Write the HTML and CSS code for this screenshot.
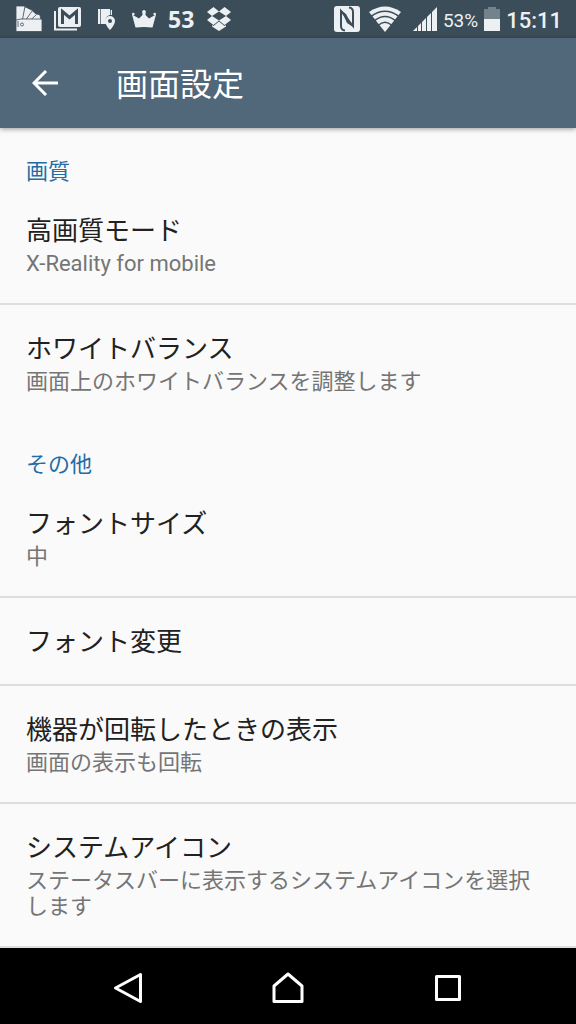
FILE: index.html
```html
<!DOCTYPE html>
<html lang="ja">
<head>
<meta charset="utf-8">
<meta name="viewport" content="width=device-width, initial-scale=1">
<title>画面設定</title>
<link rel="stylesheet" href="styles.css">
</head>
<body>
<div class="status-bar">
  <div class="notifications">
    <svg width="26" height="26" viewBox="0 0 26 26" fill="#edf0f2" stroke="#3c4d5a" stroke-width="0.8">
      <path d="M18 7l6 2 1 5.500L7 22z"/><path d="M14.500 3l6 5.500L5 23z"/><path d="M8.500 .500l8 4L4 22z"/><path d="M0 0h9L5 22H0z"/>
      <path d="M0 14l5-1h20q1 0 1 1v10.500q0 1-1 1H1q-1 0-1-1z"/><circle cx="6" cy="18.500" r="1.500"/><path d="M2 15v6"/>
    </svg>
    <svg class="mail" width="28" height="24" viewBox="0 0 28 24" fill="none">
      <path d="M1 4v18.500H23" stroke="#edf0f2" stroke-width="2"/>
      <rect x="4" y="0" width="23" height="20" rx="2" fill="#edf0f2"/>
      <path d="M8.500 17V4.500l7 6 7-6V17" stroke="#3c4d5a" stroke-width="3"/>
    </svg>
    <svg class="place" width="18" height="22" viewBox="0 0 18 22">
      <path d="M0 1h2v15H0zM2.700 1H12v6c-4 1-6 5-3 9H2.700zM12.700 2H14v5h-1.300z" fill="#edf0f2"/>
      <path d="M12 8a5 5 0 0 0-5 5c0 4 5 9 5 9s5-5 5-9a5 5 0 0 0-5-5zm0 3a2 2 0 1 1 0 4 2 2 0 0 1 0-4z" fill="#edf0f2" fill-rule="evenodd"/>
    </svg>
    <svg width="24" height="18" viewBox="0 0 24 18" fill="#edf0f2">
      <path d="M3.500 17.500L0 4.500l7 4L10.500 5V2h3v3L17 8.500l7-4-3.500 13q-8.500-1-17 0z"/>
      <circle cx="1.300" cy="4" r="1.300"/><circle cx="12" cy="1.800" r="1.800"/><circle cx="22.700" cy="4" r="1.300"/>
    </svg>
    <span class="count">53</span>
    <svg width="26" height="24" viewBox="0 0 26 24" fill="#edf0f2">
      <path d="M7.500 0L13 4.500 6 9 1 5zM18.500 0L13 4.500 20 9l5-4zM6 9l7 4.500L7.500 18 1 13zM20 9l-7 4.500 5.500 4.500 6.500-5zM13 14.500l5.500 4.500 1.500-1v1.500L13 24l-7-4.500V18l1.500 1z"/>
    </svg>
  </div>
  <div class="system">
    <svg class="nfc" width="26" height="26" viewBox="0 0 26 26">
      <rect x="0" y="0" width="26" height="26" rx="3" fill="#edf0f2"/>
      <path d="M11 24.500Q7 24 7 20V5L19 20V6Q19 2 15 1.500" fill="none" stroke="#3c4d5a" stroke-width="2"/>
      <path d="M7 4L12 8l7 13-6-4z" fill="#3c4d5a"/>
    </svg>
    <svg class="wifi" width="32" height="26" viewBox="0 0 32 26" fill="#edf0f2">
      <path d="M0 6Q16-5 32 6L16 26z"/>
      <path d="M2 10.500Q16 0 30 10.500M5 15Q16 6 27 15M9 19.500Q16 13 23 19.500" fill="none" stroke="#3c4d5a" stroke-width="1.600"/>
    </svg>
    <svg class="signal" width="24" height="24" viewBox="0 0 24 24" fill="#edf0f2">
      <path d="M0 24L24 0v24z"/><path d="M4.500 18v6M8.500 13v11M13.500 9v15M18.500 4v20" stroke="#3c4d5a"/>
    </svg>
    <span class="percent">53%</span>
    <svg class="battery" width="16" height="24" viewBox="0 0 16 24">
      <path d="M0 2h4V0h8v2h4v10H0z" fill="#74828c"/><path d="M0 12h16v12H0z" fill="#edf0f2"/>
    </svg>
    <time class="clock">15:11</time>
  </div>
</div>
<header class="app-bar">
  <button class="back" type="button" aria-label="戻る">
    <svg width="26" height="26" viewBox="0 0 26 26" fill="none" stroke="#fff" stroke-width="3"><path d="M26 13H2M14 1L2 13l12 12"/></svg>
  </button>
  <h1 class="title">画面設定</h1>
</header>
<main class="settings">
  <section>
    <h2 class="category">画質</h2>
    <button class="item" type="button"><span class="name">高画質モード</span><span class="summary">X-Reality for mobile</span></button>
    <button class="item" type="button"><span class="name">ホワイトバランス</span><span class="summary">画面上のホワイトバランスを調整します</span></button>
  </section>
  <section>
    <h2 class="category">その他</h2>
    <button class="item" type="button"><span class="name">フォントサイズ</span><span class="summary">中</span></button>
    <button class="item" type="button"><span class="name">フォント変更</span></button>
    <button class="item" type="button"><span class="name">機器が回転したときの表示</span><span class="summary">画面の表示も回転</span></button>
    <button class="item" type="button"><span class="name">システムアイコン</span><span class="summary">ステータスバーに表示するシステムアイコンを選択します</span></button>
  </section>
</main>
<nav class="nav-bar">
  <button class="nav-button" type="button" aria-label="戻る">
    <svg width="32" height="32" viewBox="0 0 32 32"><path d="M28.500 2.500v27L3.500 16z"/></svg>
  </button>
  <button class="nav-button" type="button" aria-label="ホーム">
    <svg width="32" height="32" viewBox="0 0 32 32"><path d="M2 29.500V14L16 2l14 12v15.500z"/></svg>
  </button>
  <button class="nav-button" type="button" aria-label="最近使ったアプリ">
    <svg width="32" height="32" viewBox="0 0 32 32"><path d="M4.500 4.500h23v23h-23z"/></svg>
  </button>
</nav>
</body>
</html>
```
FILE: styles.css
```css
* { box-sizing: border-box; }

body {
  margin: 0;
  min-height: 100vh;
  display: flex;
  flex-direction: column;
  background: #fafafa;
  color: #212121;
  font-family: Roboto, "Noto Sans CJK JP", sans-serif;
}

button {
  margin: 0;
  padding: 0;
  border: 0;
  background: none;
  color: inherit;
  font: inherit;
  cursor: pointer;
}

svg { display: block; flex: none; }

.status-bar {
  height: 38px;
  padding: 0 14px 0 16px;
  display: flex;
  align-items: center;
  justify-content: space-between;
  background: #3c4d5a;
  color: #edf0f2;
}

.notifications { display: flex; align-items: center; gap: 12px; }
.mail, .place { margin-right: 4px; }
.system { display: flex; align-items: center; gap: 6px; }
.nfc { margin-right: 3px; }
.wifi { margin-right: 6px; }
.count { font: 700 23px/30px "Noto Sans", sans-serif; }
.percent { font-size: 19px; padding-top: 2px; }
.clock { font-size: 22px; font-weight: 500; padding-top: 2px; }

.app-bar {
  position: relative;
  height: 90px;
  padding-left: 32px;
  display: flex;
  align-items: center;
  gap: 58px;
  background: #51677a;
  color: #fff;
  box-shadow: 0 1px 5px rgba(0, 0, 0, 0.4);
}

.title { margin: 0; padding-top: 4px; font-size: 32px; font-weight: 400; line-height: 40px; }

.settings { flex: 1; }

.category {
  margin: 0;
  padding: 31px 26px 2px;
  color: #256ca5;
  font-size: 22px;
  font-weight: 400;
  line-height: 26px;
}

.item {
  display: block;
  width: 100%;
  padding: 25px 26px 21px;
  text-align: left;
}

.item:not(:last-child), .settings section:last-child .item {
  border-bottom: 2px solid #dedede;
}

.name { display: block; font-size: 26px; line-height: 38px; }
.summary { display: block; margin: 1px 0 5px; color: #757575; font-size: 22px; line-height: 26px; }
.name:only-child { padding-bottom: 2px; }

.nav-bar {
  height: 76px;
  display: flex;
  justify-content: center;
  gap: 128px;
  background: #000;
}

.nav-button { display: flex; align-items: center; padding-top: 4px; }
.nav-button svg { fill: none; stroke: #fff; stroke-width: 3; stroke-linejoin: round; }
```
